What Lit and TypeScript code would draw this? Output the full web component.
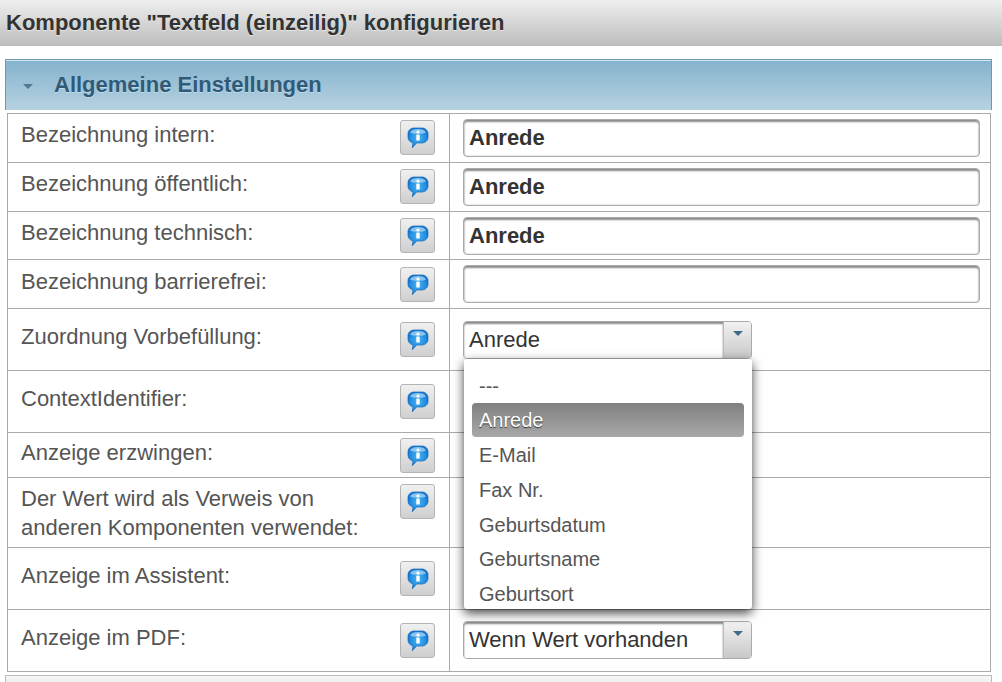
import { LitElement, html, css, svg } from "lit";
import { customElement } from "lit/decorators.js";

type Row = { label: string[]; h: string; val?: string; kind?: "text" | "select" | "none"; bold?: boolean };

const rows: Row[] = [
  { label: ["Bezeichnung intern:"], h: "r49", val: "Anrede", kind: "text", bold: true },
  { label: ["Bezeichnung öffentlich:"], h: "r49", val: "Anrede", kind: "text", bold: true },
  { label: ["Bezeichnung technisch:"], h: "r48", val: "Anrede", kind: "text", bold: true },
  { label: ["Bezeichnung barrierefrei:"], h: "r49 low", val: "", kind: "text" },
  { label: ["Zuordnung Vorbefüllung:"], h: "r62", val: "Anrede", kind: "select" },
  { label: ["ContextIdentifier:"], h: "r62", kind: "none" },
  { label: ["Anzeige erzwingen:"], h: "r45", kind: "none" },
  { label: ["Der Wert wird als Verweis von", "anderen Komponenten verwendet:"], h: "r70", kind: "none" },
  { label: ["Anzeige im Assistent:"], h: "r62", kind: "none" },
  { label: ["Anzeige im PDF:"], h: "r62 last", val: "Wenn Wert vorhanden", kind: "select" },
];

const options = ["---", "Anrede", "E-Mail", "Fax Nr.", "Geburtsdatum", "Geburtsname", "Geburtsort"];

const infoIcon = svg`<svg width="22" height="22" viewBox="0 0 22 22">
  <defs>
    <radialGradient id="bub" cx=".5" cy=".5" r=".62">
      <stop offset="0" stop-color="#4fb2ee"/><stop offset="0.62" stop-color="#1f8ee2"/><stop offset="1" stop-color="#0f5fb8"/>
    </radialGradient>
  </defs>
  <path d="M7 1h8c3.300 0 6 2.500 6 5.600v3.700c0 3.100-2.700 5.700-6 5.700H9.700L5.300 20.800l.7-5C3 15.400 1 13 1 10.300V6.600C1 3.500 3.700 1 7 1z" fill="url(#bub)" stroke="#1669bf" stroke-width=".7"/>
  <path d="M3 5.400C4.300 2.800 7 2 11 2s6.700.8 8 3.400c-2 1.700-14 1.700-16 0z" fill="#cfeafa" opacity=".6"/>
  <rect x="9.300" y="7.600" width="3.400" height="6" rx=".4" fill="#fff"/>
  <circle cx="11" cy="5" r="1.600" fill="#fff"/>
</svg>`;

@customElement("app-root")
export class AppRoot extends LitElement {
  static styles = css`
    :host { display: block; position: relative; width: 1002px; height: 682px; overflow: hidden; background: #fff;
      font-family: "Liberation Sans", Arial, sans-serif; color: #555; }
    .title { height: 46px; box-sizing: border-box; padding: 10px 0 0 6px; background: linear-gradient(#eeeeee, #bdbdbd);
      font-size: 22px; line-height: 25px; font-weight: bold; color: #333; text-shadow: 0 1px 0 rgba(255,255,255,.5); }
    .section { margin: 13px 10px 0 5px; height: 51px; box-sizing: border-box; border: 1px solid #6f97ad; border-bottom: 0;
      box-shadow: inset 0 1px 0 #d5e6ef; background: linear-gradient(#84b2cd, #b6d2e1); display: flex; align-items: center;
      padding-left: 17px; gap: 21px; font-size: 22px; font-weight: bold; color: #2f5b78; text-shadow: 0 1px 0 rgba(255,255,255,.35); }
    .tri { width: 0; height: 0; border: 5px solid transparent; border-top: 5px solid #4e7a93; border-bottom: 0; margin-top: 2px; }
    .table { margin: 3px 0 0 7px; width: 984px; box-sizing: border-box; border: 1px solid #aaa; border-bottom: 0; }
    .row { display: flex; box-sizing: border-box; border-bottom: 1px solid #aaa; }
    .r49 { height: 49px; }
    .r48 { height: 48px; }
    .r62 { height: 62px; }
    .r45 { height: 45px; }
    .r70 { height: 70px; }
    .left { width: 442px; box-sizing: border-box; border-right: 1px solid #aaa; display: flex; justify-content: space-between;
      padding: 6px 14px 0 13px; font-size: 22px; line-height: 29px; color: #555; }
    .low .left { padding-top: 7px; }
    .r62 .left { padding-top: 13px; }
    .r45 .left { padding-top: 5px; }
    .r70 .left { padding-top: 6px; }
    .info { width: 35px; height: 35px; box-sizing: border-box; border: 1px solid #b4b4b4; border-radius: 3px;
      background: linear-gradient(#f0f0f0, #cfcfcf); display: flex; align-items: center; justify-content: center; }
    .right { flex: 1; padding: 5px 0 0 13px; }
    .r62 .right { padding-top: 12px; }
    .last .right { padding-top: 11px; }
    .input { width: 517px; height: 38px; box-sizing: border-box; border: 1px solid #aaa; border-radius: 4px;
      padding: 4px 5px 0; font-size: 22px; line-height: 28px; color: #333; box-shadow: inset 0 2px 2px #8a8a8a, inset 0 0 2px #bbb; }
    .bold { font-weight: bold; }
    .select { width: 289px; height: 38px; box-sizing: border-box; border: 1px solid #aaa; border-radius: 4px;
      display: flex; font-size: 22px; color: #333; }
    .sel-val { flex: 1; padding: 4px 5px 0; line-height: 28px; background: #fff; border-radius: 3px 0 0 3px;
      box-shadow: inset 0 2px 2px #8a8a8a; }
    .sel-btn { width: 28px; border-left: 1px solid #bbb; background: linear-gradient(#f2f2f2, #c8c8c8); border-radius: 0 3px 3px 0;
      display: flex; justify-content: center; padding-top: 9px; box-sizing: border-box; }
    .sel-tri { width: 0; height: 0; border: 5px solid transparent; border-top: 5px solid #3b6c88; border-bottom: 0; }
    .next { position: absolute; left: 5px; width: 987px; top: 675px; height: 10px; box-sizing: border-box; border: 1px solid #bbb; background: linear-gradient(#f6f6f6, #eeeeee); }
    .menu { position: absolute; left: 464px; top: 359px; width: 288px; height: 250px; box-sizing: border-box; background: #fff;
      border-radius: 3px; box-shadow: 0 4px 11px rgba(0,0,0,.75); padding: 9px 8px 0; font-size: 20px; color: #555; }
    .opt { height: 34.7px; line-height: 34px; padding: 1px 0 0 7px; border-radius: 4px; box-sizing: border-box; }
    .opt.sel { padding-top: 0; background: linear-gradient(#808080, #a8a8a8); color: #fff; text-shadow: 0 1px 1px #333; }
  `;
  render() {
    return html`
      <div class="title">Komponente "Textfeld (einzeilig)" konfigurieren</div>
      <div class="section"><span class="tri"></span><span>Allgemeine Einstellungen</span></div>
      <div class="table">
        ${rows.map(
          (r) => html`<div class="row ${r.h}">
            <div class="left">
              <div>${r.label.map((l) => html`<div>${l}</div>`)}</div>
              <div class="info">${infoIcon}</div>
            </div>
            <div class="right">
              ${r.kind === "text"
                ? html`<div class="input ${r.bold ? "bold" : ""}">${r.val}</div>`
                : r.kind === "select"
                ? html`<div class="select"><div class="sel-val">${r.val}</div><div class="sel-btn"><span class="sel-tri"></span></div></div>`
                : ""}
            </div>
          </div>`
        )}
      </div>
      <div class="next"></div>
      <div class="menu">
        ${options.map((o) => html`<div class="opt ${o === "Anrede" ? "sel" : ""}">${o}</div>`)}
      </div>
    `;
  }
}
